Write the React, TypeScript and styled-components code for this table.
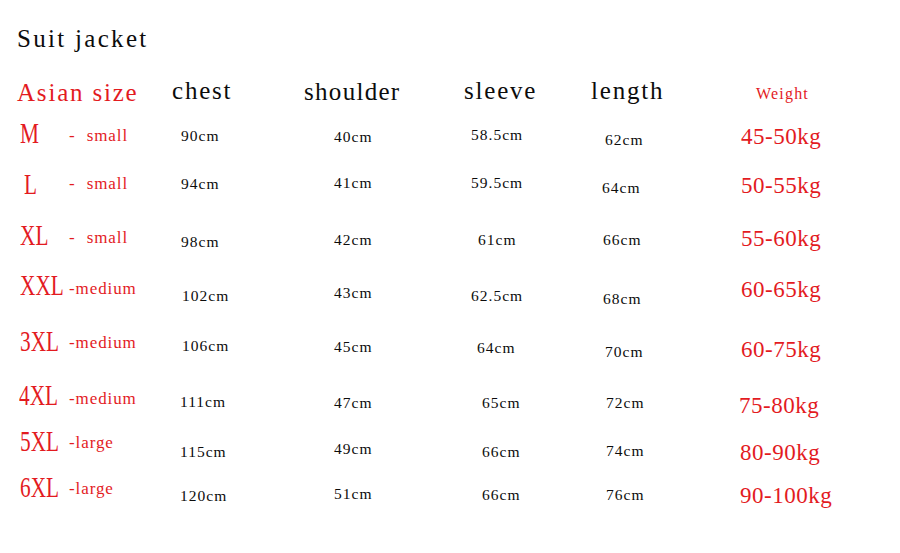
import React from 'react';
import styled, { createGlobalStyle } from 'styled-components';

const RED = '#e31b1f';
const INK = '#0c0c0c';
const SERIF = `"Liberation Serif", "Times New Roman", serif`;
const LINE = 30;

const Global = createGlobalStyle`
  html, body { margin: 0; padding: 0; background: #ffffff; }
  body { width: 900px; height: 553px; overflow: hidden; }
`;

const Sheet = styled.div`
  width: 900px;
  height: 553px;
  box-sizing: border-box;
  padding-left: 17px;
  background: #ffffff;
  display: flex;
  flex-direction: column;
  font-family: ${SERIF};
`;

const TitleBar = styled.div`
  height: 70px;
  box-sizing: border-box;
  padding-top: 24px;
  line-height: ${LINE}px;
`;

const Row = styled.div<{ $h: number }>`
  display: grid;
  grid-template-columns: 52px 103px 131px 160px 127px 140px 1fr;
  height: ${(p) => p.$h}px;
`;

const Cell = styled.div<{ $dx: number; $dy: number }>`
  min-width: 0;
  box-sizing: border-box;
  padding-left: ${(p) => p.$dx}px;
  padding-top: ${(p) => p.$dy}px;
  line-height: ${LINE}px;
  white-space: nowrap;
`;

const Heading = styled.span<{ $red?: boolean; $spacing?: number }>`
  display: inline-block;
  font-size: 25px;
  letter-spacing: ${(p) => p.$spacing ?? 1.8}px;
  color: ${(p) => (p.$red ? RED : INK)};
`;

const WeightHeading = styled.span`
  display: inline-block;
  font-size: 16px;
  letter-spacing: 1.2px;
  color: ${RED};
`;

const Measure = styled.span`
  display: inline-block;
  font-size: 15.5px;
  letter-spacing: 1px;
  color: ${INK};
`;

const SizeMark = styled.span`
  display: inline-block;
  font-size: 30px;
  color: ${RED};
  transform: scaleX(0.71);
  transform-origin: 0 50%;
`;

const SizeNote = styled.span`
  display: inline-block;
  font-size: 17px;
  letter-spacing: 0.9px;
  word-spacing: 6px;
  color: ${RED};
`;

const WeightRange = styled.span`
  display: inline-block;
  font-size: 23px;
  letter-spacing: 0.5px;
  color: ${RED};
`;

type Spot = [string, number, number];

const COLS = [17, 69, 172, 303, 463, 590, 730];

const HEADER_TOP = 70;
const HEADER_H = 40;

const headers: Spot[] = [
  ['Asian size', 17, 93.4],
  ['', 69, 93],
  ['chest', 172, 90.8],
  ['shoulder', 304, 91.7],
  ['sleeve', 464, 91.3],
  ['length', 591, 91.3],
  ['Weight', 756, 94.2],
];

type BodyRow = {
  top: number;
  h: number;
  size: Spot;
  note: Spot;
  chest: Spot;
  shoulder: Spot;
  sleeve: Spot;
  length: Spot;
  weight: Spot;
};

const rows: BodyRow[] = [
  {
    top: 110, h: 50,
    size: ['M', 20, 132.5], note: ['- small', 69, 136.4],
    chest: ['90cm', 181, 135.7], shoulder: ['40cm', 334, 136.7],
    sleeve: ['58.5cm', 471, 135], length: ['62cm', 605, 139.5],
    weight: ['45-50kg', 741, 136.5],
  },
  {
    top: 160, h: 50,
    size: ['L', 24, 184], note: ['- small', 69, 183.5],
    chest: ['94cm', 181, 183.5], shoulder: ['41cm', 334, 183],
    sleeve: ['59.5cm', 471, 182.7], length: ['64cm', 602, 188],
    weight: ['50-55kg', 741, 185.5],
  },
  {
    top: 210, h: 52,
    size: ['XL', 20, 234.5], note: ['- small', 69, 238.3],
    chest: ['98cm', 181, 241.5], shoulder: ['42cm', 334, 240],
    sleeve: ['61cm', 478, 240], length: ['66cm', 603, 240],
    weight: ['55-60kg', 741, 238.5],
  },
  {
    top: 262, h: 53,
    size: ['XXL', 20, 284.5], note: ['-medium', 69, 288.5],
    chest: ['102cm', 182, 296], shoulder: ['43cm', 334, 293],
    sleeve: ['62.5cm', 471, 296], length: ['68cm', 603, 299],
    weight: ['60-65kg', 741, 289.5],
  },
  {
    top: 315, h: 55,
    size: ['3XL', 20, 341.3], note: ['-medium', 69, 342.8],
    chest: ['106cm', 182, 346], shoulder: ['45cm', 334, 347],
    sleeve: ['64cm', 477, 348], length: ['70cm', 605, 352],
    weight: ['60-75kg', 741, 349.5],
  },
  {
    top: 370, h: 50,
    size: ['4XL', 19, 395], note: ['-medium', 69, 398.8],
    chest: ['111cm', 180, 401.7], shoulder: ['47cm', 334, 403],
    sleeve: ['65cm', 482, 403], length: ['72cm', 606, 403],
    weight: ['75-80kg', 739, 405.5],
  },
  {
    top: 420, h: 45,
    size: ['5XL', 20, 440.5], note: ['-large', 69, 442.5],
    chest: ['115cm', 180, 451.5], shoulder: ['49cm', 334, 449],
    sleeve: ['66cm', 482, 452], length: ['74cm', 606, 451],
    weight: ['80-90kg', 740, 452.5],
  },
  {
    top: 465, h: 55,
    size: ['6XL', 20, 487], note: ['-large', 69, 488.7],
    chest: ['120cm', 180, 495.5], shoulder: ['51cm', 334, 494],
    sleeve: ['66cm', 482, 495], length: ['76cm', 606, 495],
    weight: ['90-100kg', 740, 496],
  },
];

const place = (spot: Spot, col: number, top: number) => ({
  $dx: Math.max(0, spot[1] - COLS[col]),
  $dy: Math.max(0, spot[2] - top - LINE / 2),
});

export default function App() {
  return (
    <>
      <Global />
      <Sheet>
        <TitleBar>
          <Heading $spacing={2.3}>Suit jacket</Heading>
        </TitleBar>
        <Row $h={HEADER_H}>
          {headers.map((spot, i) => (
            <Cell key={i} {...place(spot, i, HEADER_TOP)}>
              {i === 6 ? (
                <WeightHeading>{spot[0]}</WeightHeading>
              ) : (
                <Heading $red={i === 0} $spacing={i === 3 ? 1.3 : 1.8}>
                  {spot[0]}
                </Heading>
              )}
            </Cell>
          ))}
        </Row>
        {rows.map((r) => (
          <Row key={r.size[0]} $h={r.h}>
            <Cell {...place(r.size, 0, r.top)}>
              <SizeMark>{r.size[0]}</SizeMark>
            </Cell>
            <Cell {...place(r.note, 1, r.top)}>
              <SizeNote>{r.note[0]}</SizeNote>
            </Cell>
            <Cell {...place(r.chest, 2, r.top)}>
              <Measure>{r.chest[0]}</Measure>
            </Cell>
            <Cell {...place(r.shoulder, 3, r.top)}>
              <Measure>{r.shoulder[0]}</Measure>
            </Cell>
            <Cell {...place(r.sleeve, 4, r.top)}>
              <Measure>{r.sleeve[0]}</Measure>
            </Cell>
            <Cell {...place(r.length, 5, r.top)}>
              <Measure>{r.length[0]}</Measure>
            </Cell>
            <Cell {...place(r.weight, 6, r.top)}>
              <WeightRange>{r.weight[0]}</WeightRange>
            </Cell>
          </Row>
        ))}
      </Sheet>
    </>
  );
}
